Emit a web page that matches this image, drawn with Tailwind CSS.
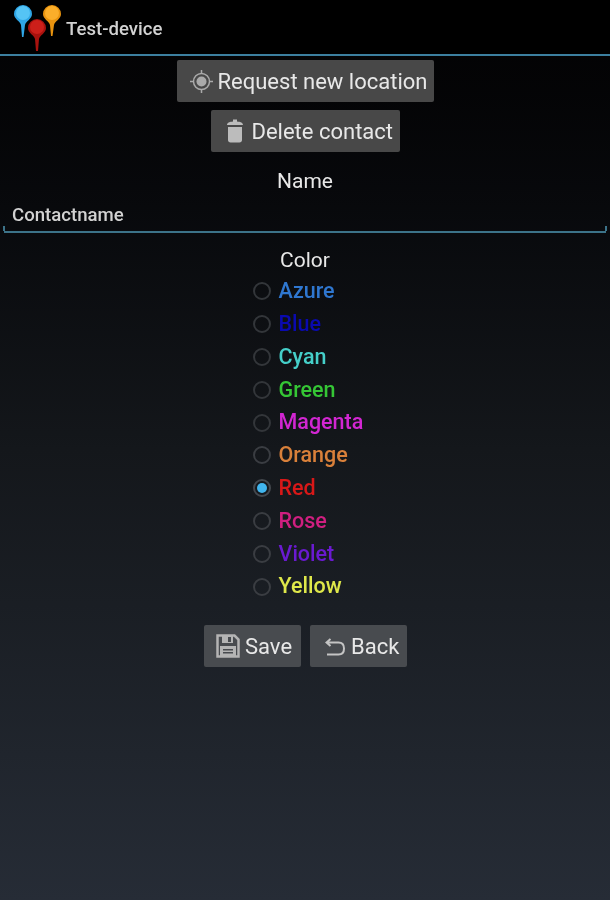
<!DOCTYPE html>
<html lang="en">
<head>
    <meta charset="UTF-8">
    <meta name="viewport" content="width=device-width, initial-scale=1.0">
    <title>Test-device</title>
    <script src="https://cdn.jsdelivr.net/npm/@tailwindcss/browser@4"></script>
</head>
<body class="w-[610px] h-[900px] overflow-hidden bg-gradient-to-b from-[#020203] via-[#14171b] via-50% to-[#262c36] font-['Roboto',sans-serif] text-[#e4e4e4]">
    <!-- Action bar -->
    <header class="h-[56px] bg-black border-b-2 border-[#3c7f9f] flex items-center blur-[0.4px]">
        <svg class="ml-[12px] mt-[-2px]" width="50" height="52" viewBox="0 0 50 52">
            <path d="M2 14 a9 9 0 0 1 18 0 c0 5 -6 7 -7 11 l-1.500 12 h-1.500 l-1 -12 c-1 -4 -7 -6 -7 -11z" fill="#2fa6e6"/>
            <circle cx="11" cy="13" r="7" fill="#55c4f5"/>
            <path d="M31 14 a9 9 0 0 1 18 0 c0 5 -6 7 -7 11 l-1.500 11 h-1.500 l-1 -11 c-1 -4 -7 -6 -7 -11z" fill="#e8930f"/>
            <circle cx="40" cy="13" r="7" fill="#fbae2a"/>
            <path d="M16 28 a9 9 0 0 1 18 0 c0 5 -6 7 -7 11 l-1 12 h-2 l-1 -12 c-1 -4 -7 -6 -7 -11z" fill="#a8120e"/>
            <circle cx="25" cy="27" r="7" fill="#cc1f1a"/>
        </svg>
        <span class="ml-[4px] mt-[6px] text-[18.600px] font-medium text-[#d2d2d2]">Test-device</span>
    </header>

    <main class="flex flex-col items-center blur-[0.4px]">
        <button class="mt-[4px] w-[257px] h-[42px] bg-[#484848] rounded-[2px] flex items-center pl-[13px] text-[22px] text-[#e8e8e8]">
            <svg class="mr-[5px]" width="23" height="23" viewBox="0 0 23 23">
                <circle cx="11.500" cy="11.500" r="8" fill="none" stroke="#aaa" stroke-width="1.500"/>
                <circle cx="11.500" cy="11.500" r="5" fill="#aaa"/>
                <path d="M11.500 0v4M11.500 19v4M0 11.500h4M19 11.500h4" stroke="#aaa" stroke-width="1.500"/>
            </svg>
            Request new location
        </button>
        <button class="mt-[8px] w-[189px] h-[42px] bg-[#484848] rounded-[2px] flex items-center pl-[15px] text-[22px] text-[#e8e8e8]">
            <svg class="mr-[8px]" width="18" height="24" viewBox="0 0 18 24">
                <path d="M7 0.500h4v2c3 .3 6 1 6 3.500H1c0-2.500 3-3.200 6-3.500zM2 8h14v13c0 1.500-1 2.500-2.500 2.500h-9C3 23.500 2 22.500 2 21z" fill="#bcbcbc"/>
            </svg>
            Delete contact
        </button>

        <div class="mt-[16px] h-[26px] leading-[26px] text-[21px] text-[#e8e8e8]">Name</div>

        <!-- Name input -->
        <div class="mt-[8px] mx-[4px] w-[602px] h-[31px] border-b-2 border-[#3c7389] pl-[8px] text-[18.600px] font-medium text-[#d2d2d2] leading-[26px] relative">
            Contactname
            <span class="absolute left-[-1px] bottom-0 w-[2px] h-[5px] bg-[#3c7389]"></span>
            <span class="absolute right-[-1px] bottom-0 w-[2px] h-[5px] bg-[#3c7389]"></span>
        </div>

        <div class="mt-[14px] h-[26px] leading-[26px] text-[21px] text-[#e8e8e8]">Color</div>

        <!-- Color radios -->
        <div class="mt-[2px] w-[112px] ml-[7px] flex flex-col text-[21.500px] font-medium">
            <div class="h-[32.800px] flex items-center gap-[8px]"><span class="w-[18px] h-[18px] rounded-full border-2 border-[#33363a]"></span><span class="text-[#2f77d0]">Azure</span></div>
            <div class="h-[32.800px] flex items-center gap-[8px]"><span class="w-[18px] h-[18px] rounded-full border-2 border-[#33363a]"></span><span class="text-[#0a0ab0]">Blue</span></div>
            <div class="h-[32.800px] flex items-center gap-[8px]"><span class="w-[18px] h-[18px] rounded-full border-2 border-[#33363a]"></span><span class="text-[#45cfc9]">Cyan</span></div>
            <div class="h-[32.800px] flex items-center gap-[8px]"><span class="w-[18px] h-[18px] rounded-full border-2 border-[#33363a]"></span><span class="text-[#35c635]">Green</span></div>
            <div class="h-[32.800px] flex items-center gap-[8px]"><span class="w-[18px] h-[18px] rounded-full border-2 border-[#33363a]"></span><span class="text-[#d226d2] whitespace-nowrap">Magenta</span></div>
            <div class="h-[32.800px] flex items-center gap-[8px]"><span class="w-[18px] h-[18px] rounded-full border-2 border-[#3a3d42]"></span><span class="text-[#d9803a]">Orange</span></div>
            <div class="h-[32.800px] flex items-center gap-[8px]"><span class="w-[18px] h-[18px] rounded-full border-2 border-[#44484e] flex items-center justify-center"><span class="w-[10px] h-[10px] rounded-full bg-[#41b5ee]"></span></span><span class="text-[#d81818]">Red</span></div>
            <div class="h-[32.800px] flex items-center gap-[8px]"><span class="w-[18px] h-[18px] rounded-full border-2 border-[#3a3d42]"></span><span class="text-[#d01f80]">Rose</span></div>
            <div class="h-[32.800px] flex items-center gap-[8px]"><span class="w-[18px] h-[18px] rounded-full border-2 border-[#3a3d42]"></span><span class="text-[#6a1ad0]">Violet</span></div>
            <div class="h-[32.800px] flex items-center gap-[8px]"><span class="w-[18px] h-[18px] rounded-full border-2 border-[#3a3d42]"></span><span class="text-[#dfe84a]">Yellow</span></div>
        </div>

        <!-- Save / Back -->
        <div class="mt-[22px] flex gap-[9px] ml-[1px]">
            <button class="w-[97px] h-[42px] bg-[#484b4f] rounded-[2px] flex items-center pl-[12px] pt-[2px] text-[22px] text-[#e8e8e8]">
                <svg class="mr-[5px] mt-[-2px]" width="24" height="24" viewBox="0 0 24 24">
                    <path d="M1.500 1.500h17l4 4v17h-21z" fill="none" stroke="#b4b4b4" stroke-width="2.500"/>
                    <path d="M6 2h11v7H6z" fill="#b4b4b4"/>
                    <path d="M12 3h3v5h-3z" fill="#484b4f"/>
                    <path d="M4 12h16v10H4z" fill="#b4b4b4"/>
                    <path d="M7 15h10v1.500H7zM7 18h10v1.500H7z" fill="#484b4f"/>
                </svg>
                Save
            </button>
            <button class="w-[97px] h-[42px] bg-[#484b4f] rounded-[2px] flex items-center pl-[15px] pt-[2px] text-[22px] text-[#e8e8e8]">
                <svg class="mr-[6px]" width="20" height="18" viewBox="0 0 20 18">
                    <path d="M5.500 1 L1.500 4.500 L5.500 8 M2 4.500 H13.500 C17 4.500 19 7 19 10.500 C19 14 17 16.500 13.500 16.500 H2" fill="none" stroke="#c4c4c4" stroke-width="2"/>
                </svg>
                Back
            </button>
        </div>
    </main>
</body>
</html>
